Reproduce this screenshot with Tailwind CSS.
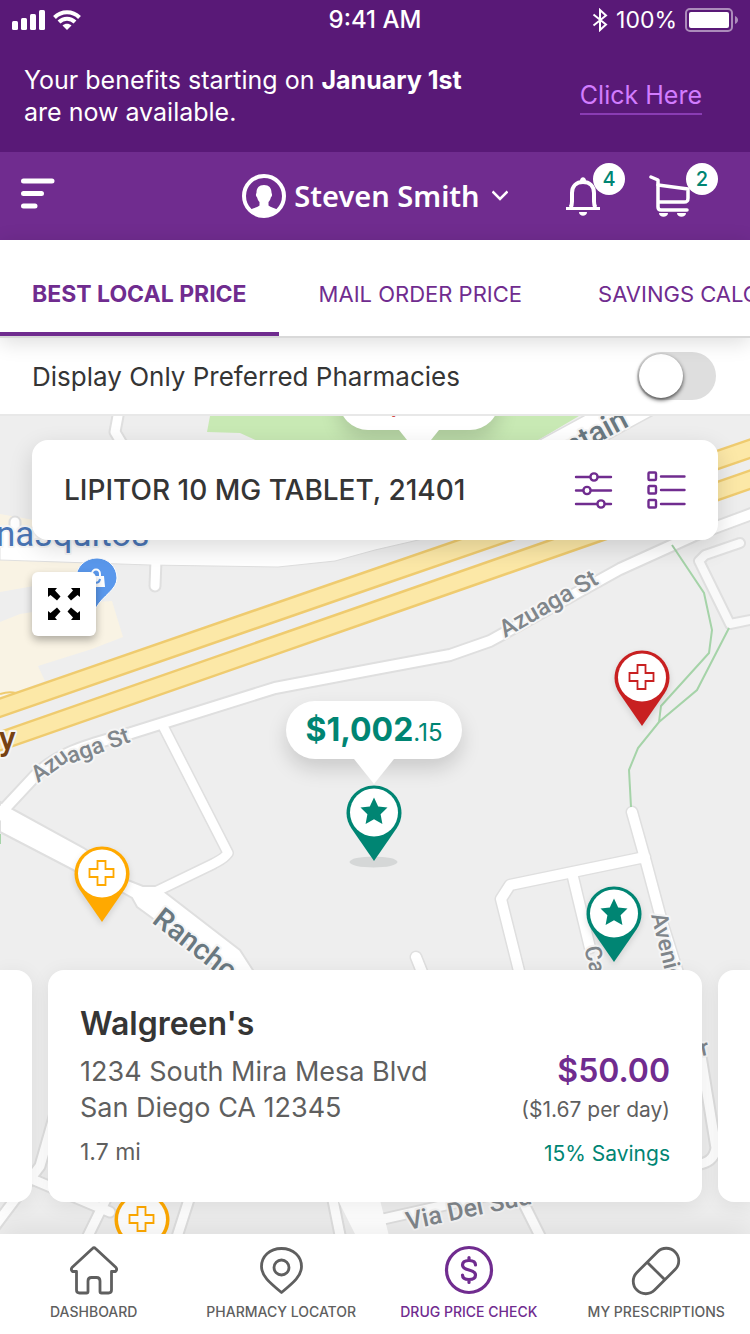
<!DOCTYPE html>
<html lang="en">
<head>
    <meta charset="UTF-8">
    <meta name="viewport" content="width=device-width, initial-scale=1.0">
    <title>Drug Price Check</title>
    <script src="https://cdn.jsdelivr.net/npm/@tailwindcss/browser@4"></script>
</head>
<body class="flex min-h-screen flex-col overflow-x-hidden bg-white font-[Inter,'Liberation_Sans',sans-serif] text-[#353535]">

    <!-- Icons used more than once -->
    <svg class="hidden">
        <symbol id="pin" viewBox="0 0 56 78">
            <path d="M28 0.5C12.8 0.5 0.5 12.8 0.5 28c0 6 2 11 5 15.500L28 76l22.500-32.500c3-4.500 5-9.500 5-15.500C55.500 12.800 43.200 0.500 28 0.500z" fill="currentColor"/>
            <circle cx="28" cy="27.500" r="24" fill="#fff"/>
        </symbol>
        <symbol id="pin-star" viewBox="0 0 56 78">
            <use href="#pin"/>
            <path d="M28 12.500l4.200 8.900 9.300 1.100-6.900 6.700 1.800 9.800-8.400-4.700-8.400 4.700 1.800-9.800-6.900-6.700 9.300-1.100z" fill="currentColor"/>
        </symbol>
        <symbol id="pin-cross" viewBox="0 0 56 78">
            <use href="#pin"/>
            <path d="M23.500 15h8v8h8v8h-8v8h-8v-8h-8v-8h8z" fill="none" stroke="currentColor" stroke-width="1.800"/>
        </symbol>
    </svg>

    <header class="text-white">
        <div class="grid h-10 grid-cols-3 items-center bg-[#591977] px-3 text-2xl">
            <div class="flex items-center gap-2">
                <svg class="h-5 w-[33px]" viewBox="0 0 33 20" fill="#fff"><rect y="11" width="6" height="9" rx="1.500"/><rect x="9" y="8" width="6" height="12" rx="1.500"/><rect x="18" y="4" width="6" height="16" rx="1.500"/><rect x="27" width="6" height="20" rx="1.500"/></svg>
                <svg class="h-5 w-7" viewBox="0 0 28 20" fill="none" stroke="#fff" stroke-width="4"><path d="M1.500 7.500C8.500.500 19.500.500 26.500 7.500"/><path d="M6 12c4.500-4.500 11.500-4.500 16 0"/><path d="M14 20l-4.500-4.500c2.500-2.300 6.500-2.300 9 0z" fill="#fff" stroke="none"/></svg>
            </div>
            <div class="text-center font-medium">9:41 AM</div>
            <div class="flex items-center justify-end gap-2">
                <svg class="h-6 w-4" viewBox="0 0 16 24" fill="none" stroke="#fff" stroke-width="2"><path d="M1.500 6.500L14 16.500 8 22V2l6 5.500L1.500 17.500"/></svg>
                <span class="text-[23px]">100%</span>
                <svg class="h-6 w-[53px]" viewBox="0 0 53 24"><rect x="1" y="1" width="46" height="22" rx="4" fill="none" stroke="#fff" stroke-opacity=".5" stroke-width="2"/><rect x="4" y="4" width="40" height="16" rx="2" fill="#fff"/><path d="M50 8c4 1.500 4 6.500 0 8z" fill="#fff" fill-opacity=".5"/></svg>
            </div>
        </div>

        <div class="flex h-28 items-center justify-between bg-[#591977] pr-12 pl-6">
            <p class="text-[25px] leading-8">Your benefits starting on <strong class="font-bold">January 1st</strong><br>are now available.</p>
            <a href="#benefits" class="border-b-2 border-[#8a3cb4] text-[25px] leading-9 text-[#d27cff]">Click Here</a>
        </div>

        <div class="grid h-22 grid-cols-[1fr_auto_1fr] items-center bg-[#702c8f] px-5">
            <button type="button" aria-label="Menu" class="justify-self-start">
                <svg class="h-9 w-9" viewBox="0 0 36 36" stroke="#fff" stroke-width="5" stroke-linecap="round"><path d="M3.500 3H32M3.500 15.500h18M3.500 28H15"/></svg>
            </button>
            <button type="button" class="flex items-center gap-2 font-['Noto_Sans',sans-serif] text-[29px] font-semibold">
                <svg class="h-11 w-11" viewBox="0 0 44 44"><circle cx="22" cy="22" r="20" fill="none" stroke="#fff" stroke-width="4"/><path d="M22 11c5 0 7.500 3 7.500 7.500 0 1 .8 1.500.5 3-.2 1.200-1 1.500-1.300 2.500-.4 1.800-1.200 3-2.200 4v3.500c2 2 6.500 2.500 9.500 4.500-3 4-8 7-14 7s-11-3-14-7c3-2 7.500-2.500 9.500-4.500V28c-1-1-1.800-2.200-2.200-4-.3-1-1.100-1.300-1.300-2.500-.3-1.500.5-2 .5-3C14.500 14 17 11 22 11z" fill="#fff"/></svg>
                Steven Smith
                <svg class="ml-1 h-4 w-4" viewBox="0 0 16 16" fill="none" stroke="#fff" stroke-width="2.500"><path d="M0.500 3.500L8 11l7.500-7.500"/></svg>
            </button>
            <div class="flex items-start justify-end gap-6 pr-3 pb-[10px]">
                <button type="button" aria-label="Notifications" class="relative h-14 w-[60px]">
                    <svg class="h-14 w-9" viewBox="0 0 36 56" fill="none" stroke="#fff" stroke-width="4"><path d="M1 45.500h34" stroke-width="3"/><path d="M5.500 44.500c1.500-2 1.500-4 1.500-6V30c0-7 4.500-11 11-11s11 4 11 11v8.500c0 2 0 4 1.500 6"/><path d="M15 18c0-5 6-5 6 0z" fill="#fff" stroke="none"/><path d="M14 49h8c0 5-8 5-8 0z" fill="#fff" stroke="none"/></svg>
                    <span class="absolute top-0 right-0 flex size-8 items-center justify-center rounded-full bg-white text-xl font-medium text-[#008573]">4</span>
                </button>
                <button type="button" aria-label="Cart" class="relative h-14 w-[69px]">
                    <svg class="h-14 w-11" viewBox="0 0 44 56" fill="none" stroke="#fff" stroke-width="3.500" stroke-linejoin="round" stroke-linecap="round"><path d="M2 14l7 3v27c0 2 1 3 3 3h26"/><path d="M9 22l30 4v9c0 3-1 4-4 4H10"/><path d="M10 50h9c0 5-9 5-9 0zM28 50h9c0 5-9 5-9 0z" fill="#fff" stroke="none"/></svg>
                    <span class="absolute top-0 right-0 flex size-8 items-center justify-center rounded-full bg-white text-xl font-medium text-[#008573]">2</span>
                </button>
            </div>
        </div>
    </header>

    <nav class="relative z-10 flex h-[98px] overflow-hidden border-b-2 border-[#d9d9d9] bg-white text-[22px] whitespace-nowrap text-[#702c8f] shadow-[0_4px_20px_rgba(0,0,0,0.14)]">
        <a href="#local" class="flex shrink-0 items-center border-b-4 border-[#702c8f] px-8 pt-4 text-[23px] font-bold">BEST LOCAL PRICE</a>
        <a href="#mail" class="flex shrink-0 items-center px-10 pt-3">MAIL ORDER PRICE</a>
        <a href="#savings" class="flex shrink-0 items-center px-9 pt-3">SAVINGS CALCULATOR</a>
    </nav>

    <div class="flex h-[78px] items-center justify-between border-b-2 border-[#e8e8e8] pr-[34px] pl-8">
        <label for="preferred" class="text-[26px]">Display Only Preferred Pharmacies</label>
        <input id="preferred" type="checkbox" class="h-12 w-[79px] appearance-none rounded-full bg-[#dedede] p-[2px] before:block before:size-11 before:rounded-full before:bg-white before:shadow-[0_2px_4px_rgba(0,0,0,0.7)] checked:bg-[#702c8f] checked:before:translate-x-8">
    </div>

    <main class="relative flex flex-1 flex-col overflow-hidden bg-[#eee]">
        <!-- Street map -->
        <svg class="absolute inset-0 h-full w-full" viewBox="0 416 750 818" preserveAspectRatio="xMidYMid slice">
            <path d="M210 416l-3 16 33 1 20 9h275l44-26z" fill="#c8e9b4"/>
            <path d="M0 514l34 6v66L0 592zM30 561h55v24H30zM0 622l20-8 76-12 16-1 11 36-31 12-54 17 7 15-45 17z" fill="#f9f3e4"/>

            <g fill="none" stroke="#dfdfdf" stroke-linejoin="round" stroke-linecap="round">
                <path d="M660 393L500 480" stroke-width="34"/>
                <path d="M120 405l-5 27 12 20M15 522v20M156 560l-1 26" stroke-width="13"/>
                <path d="M-5 819l40-43c20-21 50-31 90-41l35-11 115-36 100-19 75-14 40-14 130-72 75-34 70-26" stroke-width="14"/>
                <path d="M163 726l65 127c-4 6-10 8-15 11l-60 29" stroke-width="12"/>
                <path d="M740 543l-35 12-6 6 31 63 30-6" stroke-width="12"/>
                <path d="M632 812l14 50 16 60 22 70M645 857l-135 28-9 14 20 80M572 873l18 75M416 957l12 30" stroke-width="13"/>
                <path d="M-5 1226l45-60 20-70M20 1174l90 38M108 1195l-22 45M192 1190l-16 50M331 1190l10 50M700 1050l16 98c-2 12-9 15-20 17M522 1200l20 40M370 1222l120-27" stroke-width="13"/>
            </g>
            <path d="M0 528l280-6 130-2 30 15-65 15-40 11-57 6L150 565 0 560z" fill="#fff" stroke="#dfdfdf"/>
            <path d="M0 802l84 46 44 32 15 6h14l83 64 22 34h-24l-86-66-15-11-5-9-9-5-48-22L0 832z" fill="#fff" stroke="#dfdfdf" stroke-width="2"/>
            <g fill="none" stroke="#fff" stroke-linejoin="round" stroke-linecap="round">
                <path d="M660 393L500 480" stroke-width="31"/>
                <path d="M120 405l-5 27 12 20M15 522v20M156 560l-1 26" stroke-width="9"/>
                <path d="M-5 819l40-43c20-21 50-31 90-41l35-11 115-36 100-19 75-14 40-14 130-72 75-34 70-26" stroke-width="10"/>
                <path d="M163 726l65 127c-4 6-10 8-15 11l-60 29" stroke-width="9"/>
                <path d="M740 543l-35 12-6 6 31 63 30-6" stroke="#f9f9f9" stroke-width="8"/>
                <path d="M632 812l14 50 16 60 22 70M645 857l-135 28-9 14 20 80M572 873l18 75M416 957l12 30" stroke-width="10"/>
                <path d="M-5 1226l45-60 20-70M20 1174l90 38M108 1195l-22 45M192 1190l-16 50M331 1190l10 50M700 1050l16 98c-2 12-9 15-20 17M522 1200l20 40M370 1222l120-27" stroke-width="9"/>
            </g>
            <path d="M338 1200h42l9 36h-33z" fill="#fff"/>

            <g fill="none">
                <path d="M-5 709.500L375 578 755 447M-5 743L375 610.500 755 478" stroke="#efcb6f" stroke-width="20"/>
                <path d="M-5 709.500L375 578 755 447M-5 743L375 610.500 755 478" stroke="#fce8a7" stroke-width="15"/>
                <path d="M0 694q9-3 16-1" stroke="#efcb6f" stroke-width="2"/>
                <path d="M672 545l32 48 8 37-3 23-48 53-2 16M729 628l-32 62-38 32-21 26-9 22 2 37M0 834v10" stroke="#a5d3a8" stroke-width="2"/>
            </g>

            <g font-family="Roboto" font-weight="500" font-size="23" fill="#80868b" stroke="#f5f5f5" stroke-width="4" paint-order="stroke" stroke-linejoin="round">
                <text transform="translate(556 465) rotate(-28)" font-size="30" fill="#697880">untain</text>
                <text transform="translate(505 638) rotate(-30)" font-size="24">Azuaga St</text>
                <text transform="translate(38 783) rotate(-36)">Azu</text>
                <text transform="translate(70 764) rotate(-20)">aga St</text>
                <text transform="translate(151 922) rotate(38)" font-size="29" fill="#697880">Rancho</text>
                <text transform="translate(584 948) rotate(76)">Calle</text>
                <text transform="translate(651 915) rotate(76)">Avenida</text>
                <text transform="translate(408 1230) rotate(-12)" font-size="25">Via Del Sud</text>
                <text transform="translate(702 1056) rotate(-12)">r</text>
                <text x="-4" y="546" font-size="35" fill="#4a75b5" font-weight="400">nasquitos</text>
                <text x="-1" y="750" font-size="34" fill="#774212">y</text>
            </g>

            <path d="M97 558c-12 0-21 9-21 20 0 12 14 17 20 30 7-13 21-18 21-30 0-11-9-20-20-20z" fill="#5a98ec" stroke="#fff"/>
            <path d="M88 576h16l1 11H88z" fill="#fff"/>
            <path d="M92 577v-3c0-6 8-6 8 0v3" fill="none" stroke="#fff" stroke-width="2"/>
            <path d="M92 579c1 5 7 5 8 0" fill="none" stroke="#5a98ec" stroke-width="2"/>
        </svg>

        <!-- Pins -->
        <button type="button" aria-label="Preferred pharmacy, $1,002.15" class="absolute top-[285px] left-[286px] flex flex-col items-center text-[#008573]">
            <span class="flex h-[58px] w-44 items-baseline justify-center rounded-full bg-white text-[32px] leading-[58px] font-bold shadow-[0_10px_20px_rgba(0,0,0,0.15)]">$1,002<span class="text-2xl leading-[58px] font-normal">.15</span></span>
            <svg class="relative h-[26px] w-10" viewBox="0 0 40 26"><path d="M0 0h40L20 25z" fill="#fff"/></svg>
            <svg class="h-[84px] w-14" viewBox="0 0 56 84" overflow="visible"><ellipse cx="27.500" cy="77" rx="24" ry="5.500" fill="#d5d7d7"/><use href="#pin-star" width="56" height="78"/></svg>
        </button>
        <button type="button" aria-label="Pharmacy" class="absolute top-[234px] left-[614px] text-[#c82021]"><svg class="h-[78px] w-14 drop-shadow-md"><use href="#pin-cross"/></svg></button>
        <button type="button" aria-label="Pharmacy" class="absolute top-[430px] left-[74px] text-[#ffa900]"><svg class="h-[78px] w-14 drop-shadow-md"><use href="#pin-cross"/></svg></button>
        <button type="button" aria-label="Preferred pharmacy" class="absolute top-[470px] left-[586px] text-[#008573]"><svg class="h-[78px] w-14 drop-shadow-md"><use href="#pin-star"/></svg></button>
        <button type="button" aria-label="Pharmacy" class="absolute top-[776px] left-[114px] text-[#ffa900]"><svg class="h-[78px] w-14"><use href="#pin-cross"/></svg></button>
        <div class="absolute -top-11 left-[339px] flex flex-col items-center">
            <span class="h-[58px] w-40 rounded-full bg-white pl-5 text-[29px] leading-[58px] font-bold text-[#c82021] shadow-[0_10px_20px_rgba(0,0,0,0.15)]">$1,087</span>
            <svg class="relative h-[26px] w-10" viewBox="0 0 40 26"><path d="M0 0h40L20 25z" fill="#fff"/></svg>
        </div>

        <div class="relative mx-8 mt-6 flex h-[100px] items-center rounded-2xl bg-white px-8 shadow-[0_8px_24px_rgba(0,0,0,0.14)]">
            <h1 class="flex-1 text-[28px] font-medium">LIPITOR 10 MG TABLET, 21401</h1>
            <button type="button" aria-label="Filters" class="mr-8">
                <svg class="h-10 w-10" viewBox="0 0 40 40" fill="none" stroke="#702c8f" stroke-width="2.400" stroke-linecap="round"><path d="M2 7h13.500M24 7h13M2 20.500h7M17.500 20.500H37M2 34h20.500M31.500 34H37"/><circle cx="20" cy="7" r="3.600"/><circle cx="13" cy="20.500" r="3.600"/><circle cx="27" cy="34" r="3.600"/></svg>
            </button>
            <button type="button" aria-label="List view">
                <svg class="h-10 w-10" viewBox="0 0 40 40" fill="none" stroke="#702c8f" stroke-width="2.400" stroke-linecap="round"><rect x="2.500" y="2.500" width="7.500" height="7.500" rx="1"/><rect x="2.500" y="16" width="7.500" height="7.500" rx="1"/><rect x="2.500" y="30" width="7.500" height="7.500" rx="1"/><path d="M15 6.500h23.500M15 20h23.500M15 34h23.500"/></svg>
            </button>
        </div>

        <button type="button" aria-label="Full screen" class="relative mt-8 ml-8 flex size-16 items-center justify-center rounded-md bg-white shadow-[0_4px_8px_rgba(0,0,0,0.3)]">
            <svg class="size-8" viewBox="0 0 32 32"><path id="arrow" d="M0 0h9L7 2.500l5.500 6-3.500 4L2.500 7 0 9z"/><use href="#arrow" transform="matrix(-1 0 0 1 32 0)"/><use href="#arrow" transform="matrix(1 0 0 -1 0 32)"/><use href="#arrow" transform="rotate(180 16 16)"/></svg>
        </button>

        <div class="relative mt-auto mb-8 flex h-58 gap-4">
            <div class="w-8 shrink-0 rounded-r-2xl bg-white shadow-[0_4px_20px_rgba(0,0,0,0.08)]"></div>
            <article class="flex flex-1 justify-between rounded-2xl bg-white px-8 pt-8 text-[#5f5f5f] shadow-[0_4px_20px_rgba(0,0,0,0.08)]">
                <div>
                    <h2 class="text-[32px] leading-[44px] font-semibold text-[#353535]">Walgreen's</h2>
                    <p class="mt-2 text-[27px] leading-9">1234 South Mira Mesa Blvd<br>San Diego CA 12345</p>
                    <p class="mt-2 text-[23px] leading-9">1.7 mi</p>
                </div>
                <div class="pt-12 text-right">
                    <p class="text-[32px] leading-[42px] font-semibold text-[#702c8f]">$50.00</p>
                    <p class="text-[21px] leading-9">($1.67 per day)</p>
                    <p class="mt-2 text-[21px] leading-9 text-[#008573]">15% Savings</p>
                </div>
            </article>
            <div class="w-8 shrink-0 rounded-l-2xl bg-white shadow-[0_4px_20px_rgba(0,0,0,0.08)]"></div>
        </div>
    </main>

    <nav class="relative grid h-25 grid-cols-4 bg-white text-center text-sm font-medium text-[#5f5f5f] shadow-[0_-10px_24px_rgba(0,0,0,0.06)]">
        <a href="#dashboard" class="flex flex-col items-center gap-2 pt-3">
            <svg class="size-12" viewBox="0 0 48 48" overflow="visible" fill="none" stroke="currentColor" stroke-width="2.800" stroke-linejoin="round"><path d="M22.500 2.500q1.500-1.500 3 0L46 21.500q1.500 2-.5 4h-4V44q0 3-3 3h-7q-1.500 0-1.500-1.500V35q0-3.500-3.500-3.500h-5Q18 31.500 18 35v10.500q0 1.500-1.500 1.500h-7q-3 0-3-3V25.500h-4q-2-2-.5-4z"/></svg>
            DASHBOARD
        </a>
        <a href="#locator" class="flex flex-col items-center gap-2 pt-3">
            <svg class="size-12" viewBox="0 0 48 48" overflow="visible" fill="none" stroke="currentColor" stroke-width="2.800" stroke-linejoin="round"><path d="M24.500 2.500c-12 0-20 8-20 18 0 9.500 8 16 20 26 12-10 20-16.500 20-26 0-10-8-18-20-18z"/><circle cx="24.500" cy="21.500" r="7.500"/></svg>
            PHARMACY LOCATOR
        </a>
        <a href="#price-check" class="flex flex-col items-center gap-2 pt-3 text-[#702c8f]">
            <svg class="size-12" viewBox="0 0 48 48" overflow="visible" fill="none" stroke="currentColor" stroke-width="3.200" stroke-linecap="round"><circle cx="24" cy="24" r="22.500"/><path d="M30.500 19c0-3-2.500-4.500-6.500-4.500S17.500 16 17.500 19s2.500 4 6.500 5 6.500 2 6.500 5-2.500 4.500-6.500 4.500-6.500-1.500-6.500-4.500M24 11.500v3M24 33.500v3"/></svg>
            DRUG PRICE CHECK
        </a>
        <a href="#prescriptions" class="flex flex-col items-center gap-2 pt-3">
            <svg class="size-12" viewBox="0 0 48 48" overflow="visible" fill="none" stroke="currentColor" stroke-width="2.800"><g transform="rotate(-45 24 25)"><rect x="-3" y="12.500" width="54" height="25" rx="12.500"/><path d="M24 12.500v25"/></g></svg>
            MY PRESCRIPTIONS
        </a>
    </nav>
</body>
</html>
